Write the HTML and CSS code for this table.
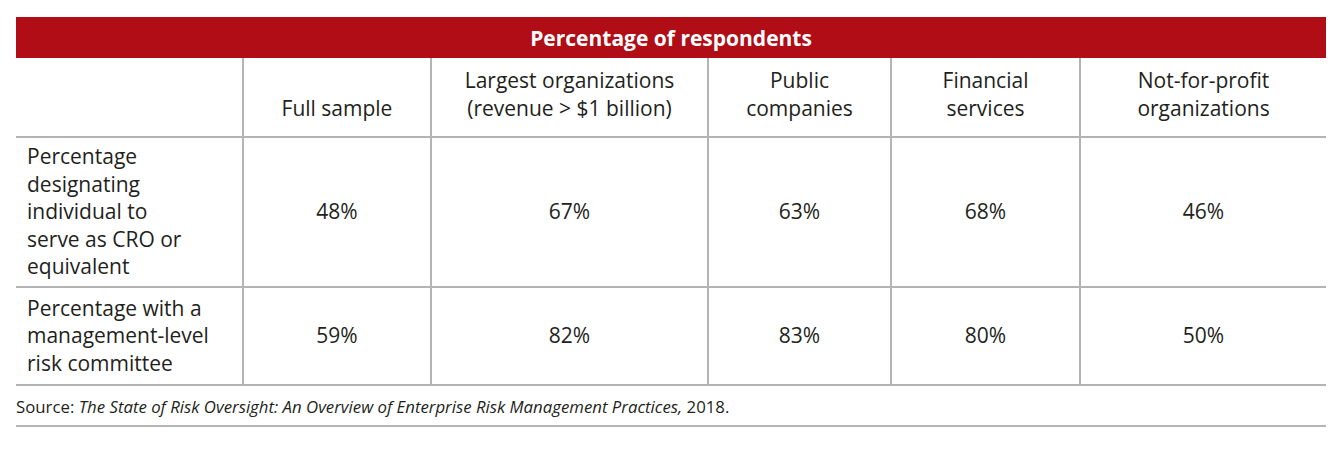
FILE: index.html
```html
<!DOCTYPE html>
<html>
<head>
<meta charset="utf-8">
<link rel="stylesheet" href="styles.css">
</head>
<body>
<div class="wrap">
  <table class="tbl">
    <colgroup>
      <col class="c1"><col class="c2"><col class="c3"><col class="c4"><col class="c5"><col class="c6">
    </colgroup>
    <thead>
      <tr><th colspan="6" class="title">Percentage of respondents</th></tr>
      <tr class="hdr">
        <th class="blank"></th>
        <th>Full sample</th>
        <th>Largest organizations<br>(revenue &gt; $1 billion)</th>
        <th>Public<br>companies</th>
        <th>Financial<br>services</th>
        <th>Not-for-profit<br>organizations</th>
      </tr>
    </thead>
    <tbody>
      <tr class="r1">
        <td class="lbl">Percentage<br>designating<br>individual to<br>serve as CRO or<br>equivalent</td>
        <td>48%</td><td>67%</td><td>63%</td><td>68%</td><td>46%</td>
      </tr>
      <tr class="r2">
        <td class="lbl">Percentage with a<br>management-level<br>risk committee</td>
        <td>59%</td><td>82%</td><td>83%</td><td>80%</td><td>50%</td>
      </tr>
    </tbody>
  </table>
  <p class="source">Source: <em>The State of Risk Oversight: An Overview of Enterprise Risk Management Practices,</em> 2018.</p>
</div>
</body>
</html>
```
FILE: styles.css
```css
html, body {
  margin: 0;
  padding: 0;
  background: #ffffff;
}
.wrap {
  width: 1310px;
  margin: 17px 0 0 16px;
  font-family: "Open Sans", "Liberation Sans", sans-serif;
  color: #231f20;
}
.tbl {
  width: 1310px;
  border-collapse: collapse;
  table-layout: fixed;
}
.c1 { width: 227px; }
.c2 { width: 188px; }
.c3 { width: 277px; }
.c4 { width: 183px; }
.c5 { width: 189px; }
.c6 { width: 246px; }
.title {
  background: #b00d17;
  color: #ffffff;
  font-weight: 700;
  font-size: 21px;
  height: 41px;
  padding: 0;
  text-align: center;
  vertical-align: middle;
}
.hdr th {
  height: 64px;
  font-weight: 400;
  font-size: 21px;
  line-height: 27.5px;
  text-align: center;
  vertical-align: bottom;
  padding: 0 0 14px 0;
  border-left: 2px solid #b4b4b4;
  border-bottom: 2px solid #b4b4b4;
}
.hdr th.blank { border-left: none; }
td {
  font-size: 21px;
  line-height: 27.5px;
  text-align: center;
  vertical-align: middle;
  border-left: 2px solid #b4b4b4;
  border-bottom: 2px solid #b4b4b4;
  padding: 0;
}
td.lbl {
  border-left: none;
  text-align: left;
  padding-left: 11px;
}
.r1 td { height: 148px; }
.r2 td { height: 96px; }
.source {
  margin: 0;
  padding: 10px 0 0 0;
  height: 29px;
  font-size: 16.8px;
  line-height: 22px;
  border-bottom: 2px solid #b4b4b4;
}
.source em { font-style: italic; }
```
